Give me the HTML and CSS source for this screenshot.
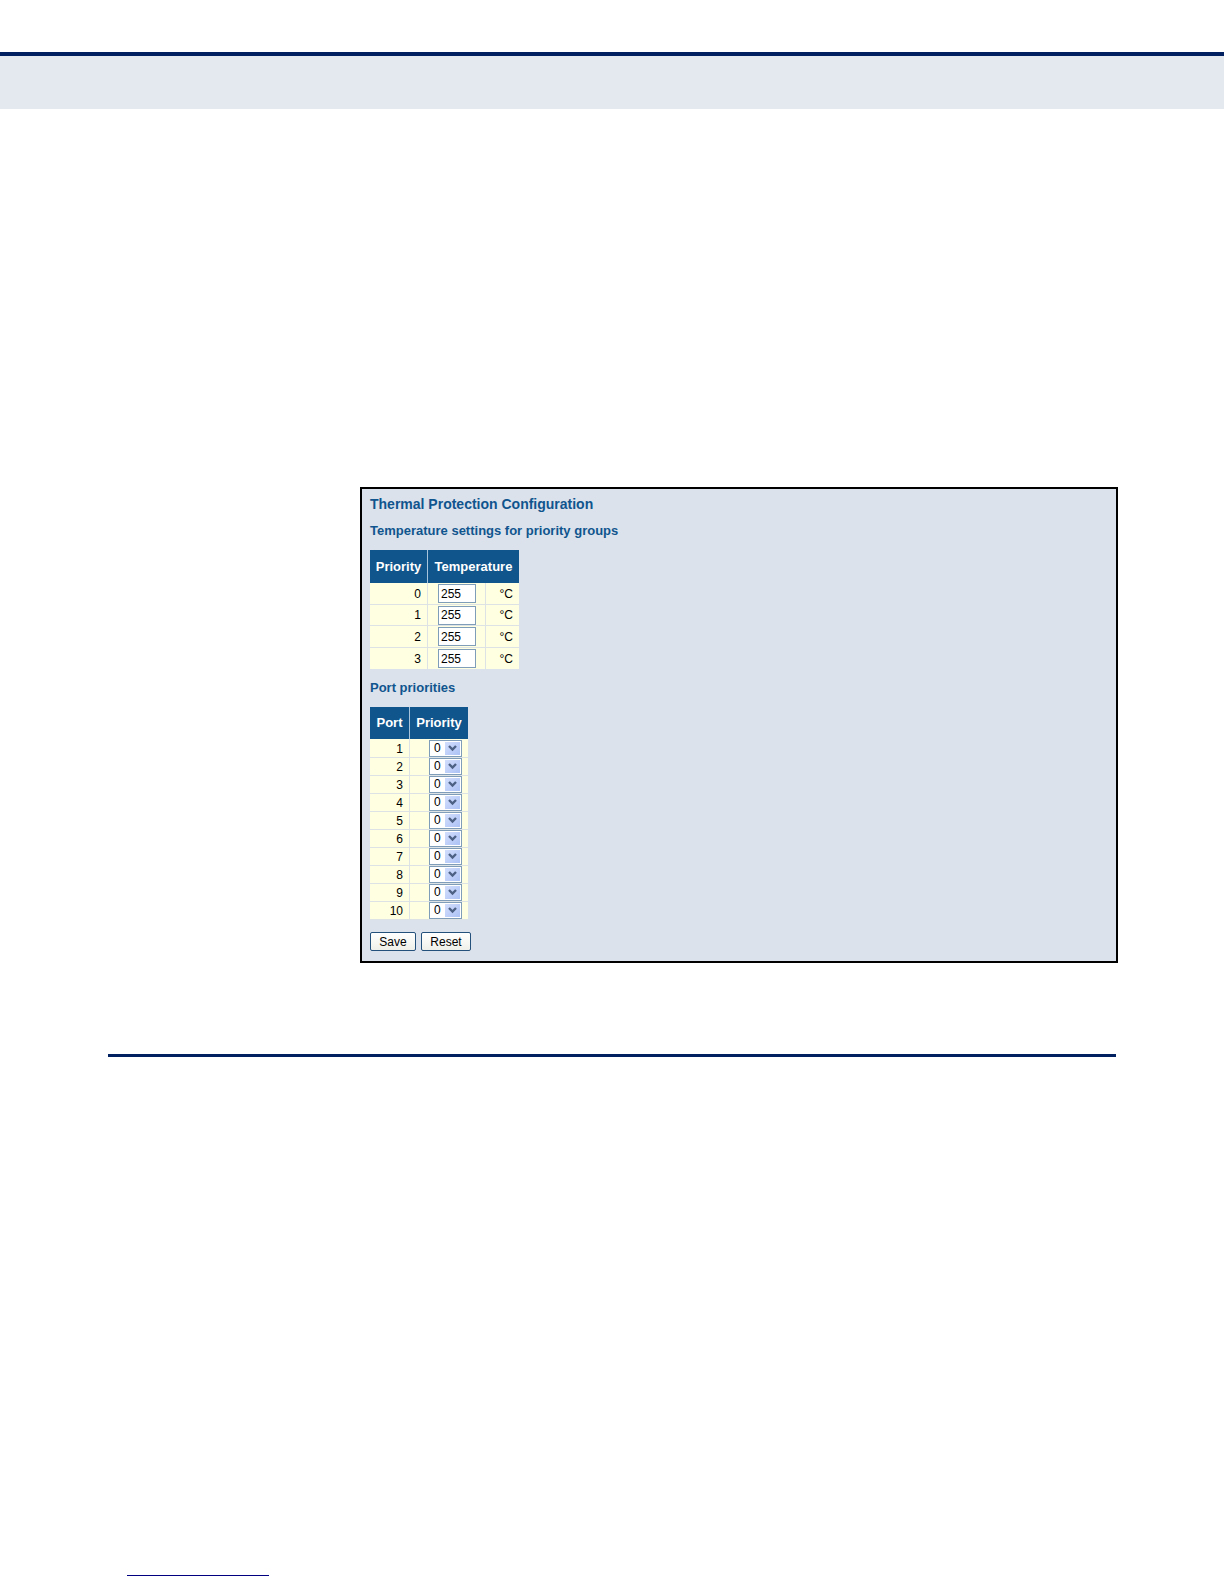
FILE: index.html
```html
<!DOCTYPE html>
<html lang="en">
<head>
<meta charset="utf-8">
<title>Thermal Protection Configuration</title>
<link rel="stylesheet" href="styles.css">
</head>
<body>
<header class="page-band"></header>
<main class="content">
<form class="panel">
<h1 class="title">Thermal Protection Configuration</h1>
<h2 class="subtitle">Temperature settings for priority groups</h2>
<table class="grid temps">
<colgroup><col class="c-priority"><col class="c-input"><col></colgroup>
<thead><tr><th>Priority</th><th colspan="2">Temperature</th></tr></thead>
<tbody>
<tr><td>0</td><td><input type="text" value="255" aria-label="Temperature for priority 0"></td><td>°C</td></tr>
<tr><td>1</td><td><input type="text" value="255" aria-label="Temperature for priority 1"></td><td>°C</td></tr>
<tr><td>2</td><td><input type="text" value="255" aria-label="Temperature for priority 2"></td><td>°C</td></tr>
<tr><td>3</td><td><input type="text" value="255" aria-label="Temperature for priority 3"></td><td>°C</td></tr>
</tbody>
</table>
<h2 class="subtitle">Port priorities</h2>
<table class="grid ports">
<colgroup><col class="c-port"><col></colgroup>
<thead><tr><th>Port</th><th>Priority</th></tr></thead>
<tbody>
<tr><td>1</td><td><span class="pick"><select aria-label="Priority of port 1"><option>0</option><option>1</option><option>2</option><option>3</option></select><svg viewBox="0 0 15 13"><path d="M4 4l3.500 3.500 3.500-3.500"/></svg></span></td></tr>
<tr><td>2</td><td><span class="pick"><select aria-label="Priority of port 2"><option>0</option><option>1</option><option>2</option><option>3</option></select><svg viewBox="0 0 15 13"><path d="M4 4l3.500 3.500 3.500-3.500"/></svg></span></td></tr>
<tr><td>3</td><td><span class="pick"><select aria-label="Priority of port 3"><option>0</option><option>1</option><option>2</option><option>3</option></select><svg viewBox="0 0 15 13"><path d="M4 4l3.500 3.500 3.500-3.500"/></svg></span></td></tr>
<tr><td>4</td><td><span class="pick"><select aria-label="Priority of port 4"><option>0</option><option>1</option><option>2</option><option>3</option></select><svg viewBox="0 0 15 13"><path d="M4 4l3.500 3.500 3.500-3.500"/></svg></span></td></tr>
<tr><td>5</td><td><span class="pick"><select aria-label="Priority of port 5"><option>0</option><option>1</option><option>2</option><option>3</option></select><svg viewBox="0 0 15 13"><path d="M4 4l3.500 3.500 3.500-3.500"/></svg></span></td></tr>
<tr><td>6</td><td><span class="pick"><select aria-label="Priority of port 6"><option>0</option><option>1</option><option>2</option><option>3</option></select><svg viewBox="0 0 15 13"><path d="M4 4l3.500 3.500 3.500-3.500"/></svg></span></td></tr>
<tr><td>7</td><td><span class="pick"><select aria-label="Priority of port 7"><option>0</option><option>1</option><option>2</option><option>3</option></select><svg viewBox="0 0 15 13"><path d="M4 4l3.500 3.500 3.500-3.500"/></svg></span></td></tr>
<tr><td>8</td><td><span class="pick"><select aria-label="Priority of port 8"><option>0</option><option>1</option><option>2</option><option>3</option></select><svg viewBox="0 0 15 13"><path d="M4 4l3.500 3.500 3.500-3.500"/></svg></span></td></tr>
<tr><td>9</td><td><span class="pick"><select aria-label="Priority of port 9"><option>0</option><option>1</option><option>2</option><option>3</option></select><svg viewBox="0 0 15 13"><path d="M4 4l3.500 3.500 3.500-3.500"/></svg></span></td></tr>
<tr><td>10</td><td><span class="pick"><select aria-label="Priority of port 10"><option>0</option><option>1</option><option>2</option><option>3</option></select><svg viewBox="0 0 15 13"><path d="M4 4l3.500 3.500 3.500-3.500"/></svg></span></td></tr>
</tbody>
</table>
<div class="actions"><button type="button" class="save">Save</button><button type="reset">Reset</button></div>
</form>
<hr class="rule">
</main>
<footer class="foot"><hr class="foot-line"></footer>
</body>
</html>
```
FILE: styles.css
```css
* { box-sizing: border-box; }

body {
  margin: 0;
  min-height: 100vh;
  display: flex;
  flex-direction: column;
  background: #fff;
  color: #000;
  font: 12px/16px "Liberation Sans", Arial, sans-serif;
}

.page-band {
  height: 57px;
  margin-top: 52px;
  border-top: 4px solid #00205f;
  background: #e4e8ef;
}

.content { flex: 1; padding: 378px 106px 0 108px; }

.panel {
  margin-left: 252px;
  padding: 7px 8px 10px;
  border: 2px solid #000;
  background: #dbe2ec;
}

.title, .subtitle { margin: 0; color: #10558e; font-weight: bold; }
.title { font-size: 14px; line-height: 16px; }
.subtitle { margin: 11px 0; font-size: 13px; line-height: 16px; }

.grid {
  table-layout: fixed;
  border-spacing: 0;
  background: #ffffe1;
}
.temps { width: 149px; }
.ports { width: 98px; }
.c-priority, .c-input { width: 58px; }
.c-port { width: 40px; }

.grid th {
  height: 33px;
  padding: 0;
  background: #10558b;
  color: #fff;
  font-size: 13px;
  font-weight: bold;
}
.ports th { height: 32px; }

.grid td {
  height: 21px;
  padding: 0 6px 0 0;
  border-bottom: 1px solid #dde3e4;
  text-align: right;
  line-height: 16px;
}
.temps tr:nth-child(odd) td { height: 22px; }
.grid tr > :not(:last-child) { border-right: 1px solid #dde3e4; }
.grid thead th:not(:last-child) { border-right-color: #a8c3dc; }
.temps tr:last-child td { border-bottom: 0; }
.temps td:nth-child(2) { padding-right: 9px; }
.ports td { height: 18px; vertical-align: bottom; }
.ports tr:first-child td { height: 19px; }

.grid input {
  display: block;
  width: 38px;
  height: 19px;
  margin-left: auto;
  padding: 0 2px;
  border: 1px solid #7f9db9;
  background: #fff;
  font: inherit;
}

.pick {
  display: grid;
  width: 33px;
  height: 17px;
  margin-left: auto;
  border: 1px solid #7f9db9;
  background: #fff;
}
.pick > * { grid-area: 1 / 1; }
.pick select {
  appearance: none;
  width: 31px;
  height: 15px;
  padding: 0 0 0 4px;
  border: 0;
  background: none;
  color: #000;
  font: inherit;
  line-height: 15px;
}
.pick svg {
  justify-self: end;
  width: 15px;
  height: 13px;
  margin: 1px;
  background: linear-gradient(135deg, #d3defc, #acc2f5);
  pointer-events: none;
}
.pick path { fill: none; stroke: #4d6185; stroke-width: 2.4; }

.actions { display: flex; gap: 5px; margin-top: 12px; }
.actions button {
  width: 50px;
  height: 19px;
  padding: 0;
  border: 1px solid #24507c;
  border-radius: 2px;
  background: linear-gradient(#fff, #f0f0ea);
  color: #000;
  font: inherit;
}
.actions .save { width: 46px; }

.rule {
  height: 3px;
  margin: 91px 2px 0 0;
  border: 0;
  background: #00205f;
}

.foot { padding: 0 127px 8px; }
.foot-line { width: 142px; height: 1px; margin: 0; border: 0; background: #000080; }
```
